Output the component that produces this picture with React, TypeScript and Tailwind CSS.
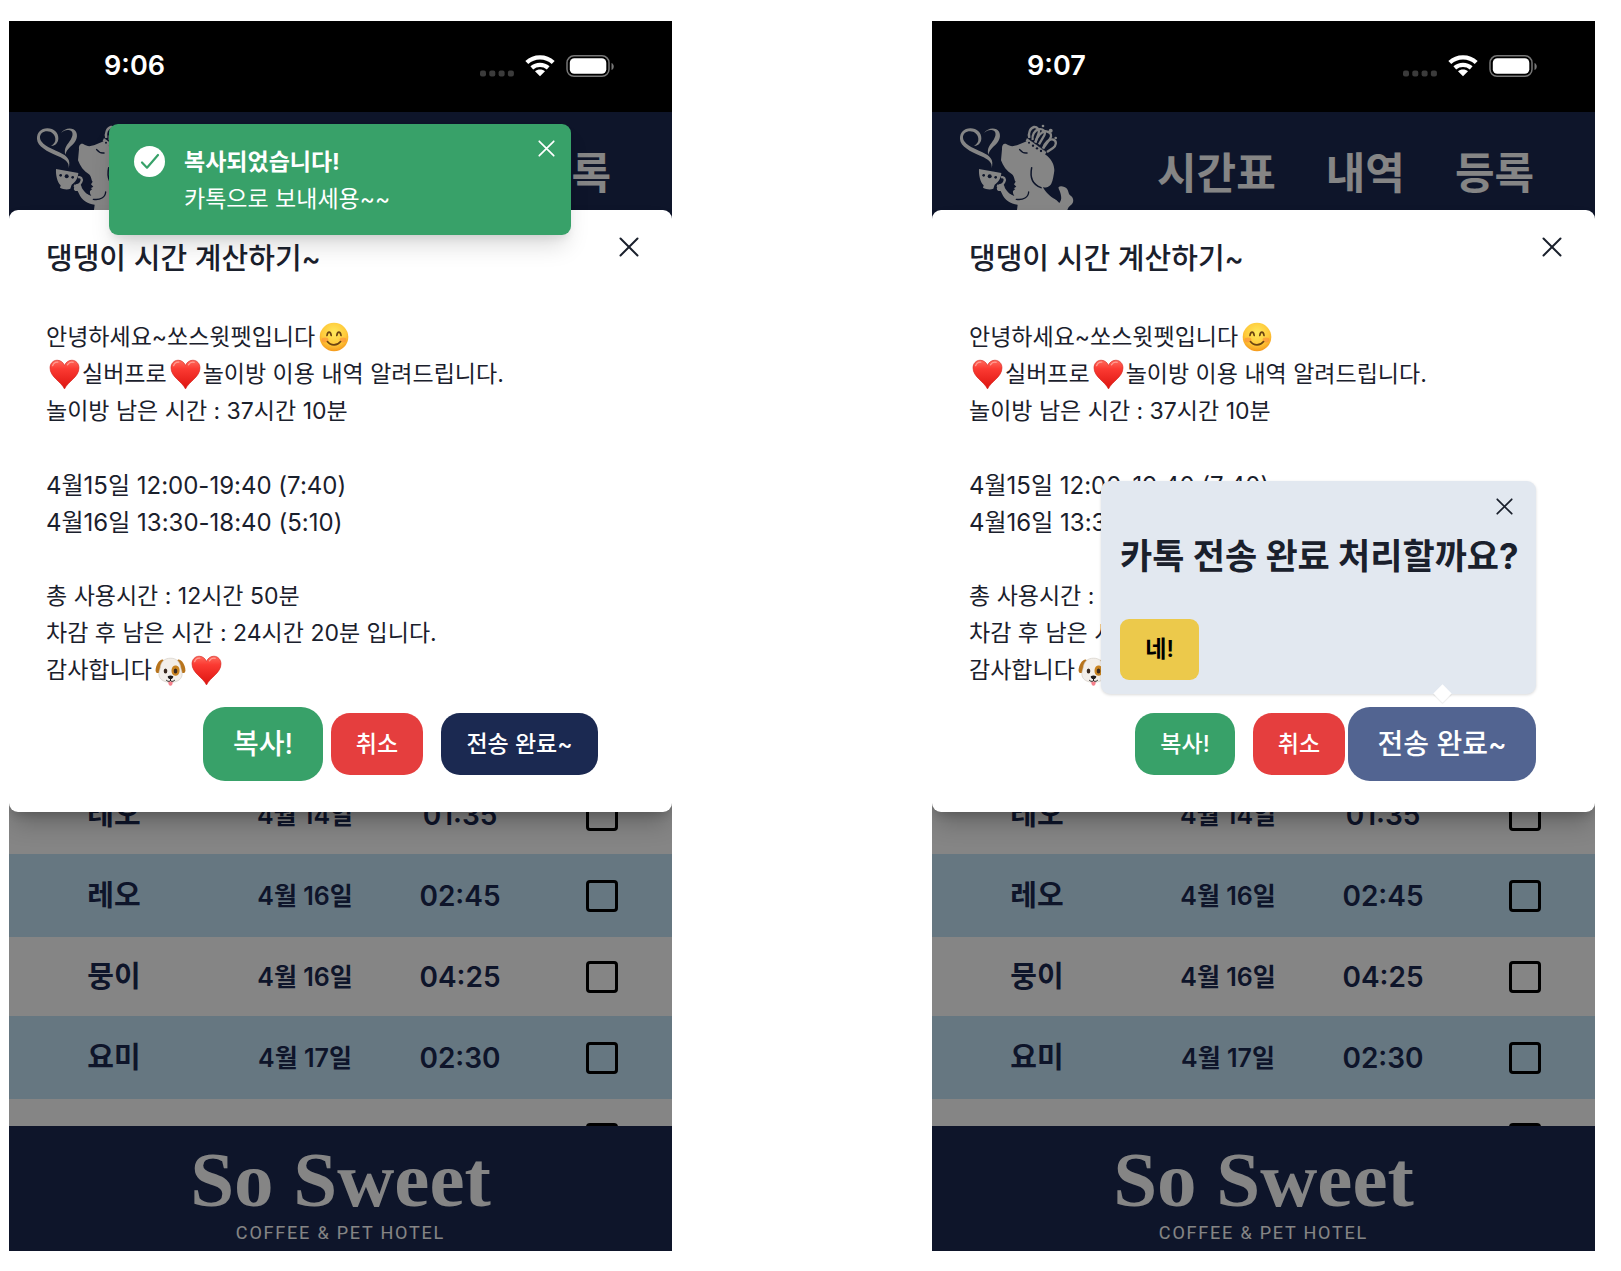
import React from "react";

const SANS = "font-['Inter','Noto_Sans_CJK_KR',sans-serif]";

function Smile() {
  return (
    <svg viewBox="0 0 30 30" role="img" aria-label="미소" className="mr-[2px] ml-[4px] inline-block h-[30px] w-[30px] align-[-7px]">
      <defs>
        <radialGradient id="smileFill" cx="0.5" cy="0.35" r="0.65">
          <stop offset="0" stopColor="#ffe95c" />
          <stop offset="0.65" stopColor="#ffc93a" />
          <stop offset="1" stopColor="#f59a1c" />
        </radialGradient>
      </defs>
      <circle cx="15" cy="15" r="14.3" fill="url(#smileFill)" />
      <ellipse cx="6" cy="18" rx="3.4" ry="2.4" fill="#fb8a3a" opacity="0.6" />
      <ellipse cx="24" cy="18" rx="3.4" ry="2.4" fill="#fb8a3a" opacity="0.6" />
      <g fill="none" stroke="#6b4412" strokeWidth="1.7" strokeLinecap="round">
        <path d="M8 13.5c.6-4.4 3.6-4.4 4.2 0" />
        <path d="M17.8 13.5c.6-4.4 3.6-4.4 4.2 0" />
        <path d="M8.4 19.6c3.2 4.4 10 4.4 13.2 0" />
      </g>
    </svg>
  );
}

function Heart() {
  return (
    <svg viewBox="0 0 30 30" role="img" aria-label="하트" className="mr-[2px] ml-[3px] inline-block h-[31px] w-[31px] align-[-8px]">
      <defs>
        <linearGradient id="heartFill" x1="0" y1="0" x2="0" y2="1">
          <stop offset="0" stopColor="#ff6a5c" />
          <stop offset="0.3" stopColor="#fb3a32" />
          <stop offset="1" stopColor="#dd1410" />
        </linearGradient>
      </defs>
      <path d="M15 29C11.5 21.5 1 17.5 1 8.6 1 4.300 4 1.200 7.900 1.200c3.300 0 5.800 2 7.100 5 1.300-3 3.800-5 7.100-5C26 1.200 29 4.300 29 8.600 29 17.500 18.500 21.500 15 29Z" fill="url(#heartFill)" stroke="#d3201a" strokeWidth="0.6" />
      <path d="M3.500 6.500c1-2.600 3-3.600 5-3.400M17.800 5.600c1.500-2.200 3.500-2.800 5.600-2.300" stroke="#ff9c92" strokeWidth="1.200" fill="none" strokeLinecap="round" />
    </svg>
  );
}

function Puppy() {
  return (
    <svg viewBox="0 0 31 29" role="img" aria-label="강아지" className="mr-[2px] ml-[3px] inline-block h-[29px] w-[31px] align-[-8px]">
      <path d="M8 2.500C4.500 2 .6 8 .6 13.500c0 2.400 2 3.200 4 2L9.500 5Z" fill="#b8741c" />
      <path d="M23 2.500C26.500 2 30.400 8 30.400 13.500c0 2.400-2 3.200-4 2L21.500 5Z" fill="#b8741c" />
      <path d="M15.500 1.200c6.500 0 9.500 4 10.200 9 .4 3 2 5 1.300 8.300-1 4.800-6 6.800-11.500 6.800S5 23.300 4 18.500C3.300 15.200 4.900 13.200 5.300 10.200c.7-5 3.700-9 10.200-9Z" fill="#f3efea" stroke="#cfc8bf" strokeWidth="0.600" />
      <path d="M20 8.500c3-.2 4.800 2 4.600 5.500-.2 3-2 5-4.400 4.800-2.600-.2-3.900-2.500-3.700-5.500.2-2.800 1.400-4.700 3.500-4.800Z" fill="#c98422" />
      <ellipse cx="10.500" cy="14" rx="1.800" ry="2.500" fill="#3a2a20" />
      <ellipse cx="20.500" cy="14" rx="1.800" ry="2.500" fill="#3a2a20" />
      <path d="M13.400 24.500h4.200c.4 2.700-.6 4.200-2.100 4.200s-2.500-1.500-2.100-4.200Z" fill="#f5808c" />
      <path d="M12.800 19.200c1.600-.8 3.800-.8 5.400 0 .5 1.300-1.300 2.900-2.700 2.900s-3.200-1.600-2.700-2.900Z" fill="#1e1a1a" />
      <path d="M15.500 22v1.600M11.500 23.400c1.500 1.300 3 1.200 4 .2 1 1 2.500 1.100 4-.2" stroke="#1e1a1a" strokeWidth="1" fill="none" strokeLinecap="round" />
    </svg>
  );
}

function DogLogo() {
  return (
    <svg viewBox="0 0 420 300" role="img" aria-label="So Sweet" className="h-[100px] w-[140px]" fill="#fff">
      <path d="M122 157c2-17-7-26-33-37C58 107 28 91 27 69c-1-19 12-32 31-32 20 0 34 14 33 31-1 14-12 23-22 21 9-5 14-12 13-21-1-12-11-22-25-22-12 0-22 8-21 20 1 16 26 29 58 43 24 11 35 22 28 48Z" />
      <path d="M99 51c9-12 25-17 37-11 13 7 14 24 5 37-10 14-25 21-29 39-6-21 8-32 16-45 8-12 8-25-3-28-9-3-18 1-26 8Z" />
      <path d="M153 100c-1-12 5-20 14-15 9 6 18 7 31 3l31-13 60 45c15 13 24 33 20 51-2 11-4 28-10 35-6 8-17 9-23 8 3 7 16 24 31 33 12 6 14 11 18 14 6-9 7-13 4-27-2-11-8-16-6-21 5-5 20-1 25 5 5 7 4 15 9 20 9 6 12 14 8 23-3 7-13 10-15 18-2 9-4 12-10 19H196l4-32c-22-2-39-15-47-33l-4-8c-8 1-13-3-11-10 2-9 10-15 18-10 5 3 4 9 7 13 6 10 15 18 27 22-2-5-5-6-4-15l7-6-5-2 8-5-7-7 5-8c-5-5-2-13-11-22-16-10-27-25-33-42Z" />
      <path d="m84 159 67 12c-1 14-7 27-20 35l-4 12c-9 4-22 2-31-3l2-7c-11-10-15-32-14-49Z" />
      <path d="M150 184c9-3 14 5 10 13-4 9-14 15-22 11" fill="none" stroke="#fff" strokeWidth="7" />
      <path d="M147 189c7-1 8 5 4 9-3 4-8 6-12 5" fill="none" stroke="#1b2951" strokeWidth="3" />
      <g fill="#1b2951">
        <circle cx="98" cy="178" r="4" />
        <circle cx="116" cy="181" r="6" />
        <circle cx="134" cy="184" r="4" />
      </g>
      <path d="M206 101c6 8 14 11 22 10M242 155c-6 30 0 50 28 60" stroke="#1b2951" strokeWidth="4.500" fill="none" strokeLinecap="round" />
      <path d="M233 228c-1 16-16 25-37 22" stroke="#1b2951" strokeWidth="4" fill="none" strokeLinecap="round" />
      <path d="m228 66 59 42-6 9-57-42Z" />
      <g fill="none" stroke="#fff" strokeWidth="7">
        <path d="M235 66c-4-14 2-30 14-33 10-1 17 9 14 18l-10 28" />
        <path d="M245 72c-3-14 6-29 17-32 15-3 23 7 18 18l-16 27" />
        <path d="M253 80c5-18 19-36 33-34 15 3 18 14 10 24l-19 26" />
        <path d="M276 98c5-19 19-31 31-27 12 5 8 19-1 25l-18 12" />
      </g>
      <path d="m229 66 58 43" stroke="#1b2951" strokeWidth="2" strokeDasharray="3 2" />
      <g fill="#1b2951">
        <circle cx="234" cy="80" r="3" />
        <circle cx="246" cy="89" r="3.500" />
        <circle cx="258" cy="97" r="3.500" />
        <circle cx="270" cy="105" r="3.500" />
      </g>
      <circle cx="276" cy="30" r="4" />
      <circle cx="299" cy="44" r="6" />
      <circle cx="314" cy="66" r="4" />
    </svg>
  );
}

function StatusIcons() {
  return (
    <svg viewBox="0 0 136 24" className="h-[24px] w-[136px]" aria-hidden="true">
      <g fill="#3b3b3b">
        <rect x="1" y="15.500" width="6" height="6" rx="2" />
        <rect x="10.300" y="15.500" width="6" height="6" rx="2" />
        <rect x="19.600" y="15.500" width="6" height="6" rx="2" />
        <rect x="28.900" y="15.500" width="6" height="6" rx="2" />
      </g>
      <path d="M61 21.300 56 16.300C58.500 13.800 63.500 13.800 66 16.300Z" fill="#fff" />
      <path d="M52.800 12.800c4.700-4 11.700-4 16.400 0M47.800 7.500c7.400-6.900 19-6.900 26.400 0" fill="none" stroke="#fff" strokeWidth="4.300" />
      <rect x="88" y="0.800" width="42" height="20.500" rx="7" fill="none" stroke="#777" strokeWidth="1.500" />
      <rect x="90.800" y="3.300" width="36.500" height="15.500" rx="4.500" fill="#fff" />
      <path d="M132.500 8c3 1 3 6 0 7Z" fill="#777" />
    </svg>
  );
}

function CloseButton({ className, size }: { className: string; size: number }) {
  return (
    <button type="button" aria-label="닫기" className={className}>
      <svg viewBox="0 0 20 20" width={size} height={size} stroke="currentColor" strokeWidth="2" strokeLinecap="round">
        <path d="M1.500 1.500 18.500 18.500M18.500 1.500 1.500 18.500" />
      </svg>
    </button>
  );
}

const rows = [
  { name: "레오", date: "4월 14일", time: "01:35" },
  { name: "레오", date: "4월 16일", time: "02:45" },
  { name: "뭉이", date: "4월 16일", time: "04:25" },
  { name: "요미", date: "4월 17일", time: "02:30" },
  { name: "", date: "", time: "" },
];

function PageLayer() {
  return (
    <div className="col-start-1 row-start-1 flex flex-col bg-white">
      <header className="flex h-[123px] items-center justify-between bg-[#1b2951] pr-[61px] pl-[19px]">
        <div className="h-[115px]">
          <DogLogo />
        </div>
        <nav className="flex gap-[50px] text-[43px] leading-none font-bold whitespace-nowrap text-white">
          <a href="#timetable">시간표</a>
          <a href="#history">내역</a>
          <a href="#register">등록</a>
        </nav>
      </header>
      <main className="flex grow flex-col justify-end">
        <div className="h-[351px] overflow-hidden">
          <table className="w-full table-fixed text-center font-semibold text-[#1b2951]">
            <colgroup>
              <col className="w-[210px]" />
              <col className="w-[172px]" />
              <col className="w-[138px]" />
              <col />
            </colgroup>
            <tbody>
              {rows.map((r, i) => (
                <tr key={i} className="h-[79px] even:h-[83px] even:bg-[#c4e4f8]">
                  <td className="text-[29px] leading-[40px] font-bold">{r.name}</td>
                  <td className="text-[25px] leading-[40px]">{r.date}</td>
                  <td className="text-[28px] leading-[40px]">{r.time}</td>
                  <td className="pl-[2px]">
                    <input
                      type="checkbox"
                      aria-label={r.name ? `${r.name} ${r.date}` : "선택"}
                      className="mx-auto block size-[32px] appearance-none rounded-[4px] border-[3px] border-black"
                    />
                  </td>
                </tr>
              ))}
            </tbody>
          </table>
        </div>
      </main>
      <footer className="flex h-[125px] flex-col items-center justify-between bg-[#1b2951] pt-[14px] pb-[8px] text-white">
        <p className="font-['Liberation_Serif',serif] text-[79px] leading-[80px] font-bold whitespace-nowrap">So Sweet</p>
        <p className="font-['Roboto',sans-serif] text-[18px] leading-[20px] tracking-widest">COFFEE &amp; PET HOTEL</p>
      </footer>
    </div>
  );
}

function Toast() {
  return (
    <div role="status" className="absolute top-[12px] left-[100px] z-20 flex w-[462px] gap-[19px] rounded-[9px] bg-[#38a169] pt-[20px] pb-[17px] pl-[25px] text-[23px] leading-[37px] text-white shadow-[0_15px_23px_-5px_rgba(0,0,0,0.15),0_6px_9px_-3px_rgba(0,0,0,0.08)]">
      <svg viewBox="0 0 31 31" className="mt-[2px] size-[31px] shrink-0" aria-hidden="true">
        <circle cx="15.500" cy="15.500" r="15.500" fill="#fff" />
        <path d="m8 16.500 5 5.200L24 9" fill="none" stroke="#38a169" strokeWidth="2.200" strokeLinecap="round" strokeLinejoin="round" />
      </svg>
      <div>
        <p className="font-bold">복사되었습니다!</p>
        <p>카톡으로 보내세용~~</p>
      </div>
      <CloseButton size={17} className="absolute top-[16px] right-[16px]" />
    </div>
  );
}

function Popover() {
  return (
    <div role="dialog" aria-label="전송 확인" className="absolute right-0 bottom-[81px] z-10 w-[435px] rounded-[9px] bg-[#e2e8f0] pt-[49px] pb-[14px] pl-[19px] shadow-[0_1px_3px_rgba(0,0,0,0.15)]">
      <CloseButton size={17} className="absolute top-[17px] right-[23px]" />
      <h2 className="text-[35px] leading-[52px] font-bold whitespace-nowrap">카톡 전송 완료 처리할까요?</h2>
      <button type="button" className="mt-[37px] block h-[61px] w-[79px] rounded-[9px] bg-[#ecc94b] text-[23px] font-semibold text-black">
        네!
      </button>
      <span className="absolute right-[87px] -bottom-[6px] size-[13px] rotate-45 bg-white shadow-[1px_1px_1px_rgba(0,0,0,0.08)]" />
    </div>
  );
}

const BTN = "h-[62px] shrink-0 rounded-[19px] text-[23px] font-medium whitespace-nowrap text-white";
const BTN_ACTIVE = "h-[74px] shrink-0 -my-[6px] rounded-[22px] text-[28px] font-medium whitespace-nowrap text-white";

function Modal({ sending }: { sending: boolean }) {
  return (
    <section aria-label="댕댕이 시간 계산하기" className="relative col-start-1 row-start-1 mt-[98px] self-start rounded-[9px] bg-white pb-[37px] text-[#1a202c] shadow-[0_15px_23px_-5px_rgba(0,0,0,0.25),0_6px_9px_-3px_rgba(0,0,0,0.15)]">
      <CloseButton size={20} className="absolute top-[27px] right-[33px]" />
      <h1 className="pt-[26px] pl-[37px] text-[29px] leading-[46px] font-medium">댕댕이 시간 계산하기~</h1>
      <div className="mt-[37px] pl-[37px] text-[23px] leading-[37px] whitespace-nowrap">
        <p className="h-[37px]">안녕하세요~쏘스윗펫입니다<Smile /></p>
        <p className="h-[37px]"><Heart />실버프로<Heart />놀이방 이용 내역 알려드립니다.</p>
        <p className="h-[37px]">놀이방 남은 시간 : 37시간 10분</p>
        <p className="mt-[37px] h-[37px] text-[24px]">4월15일 12:00-19:40 (7:40)</p>
        <p className="h-[37px] text-[24px]">4월16일 13:30-18:40 (5:10)</p>
        <p className="mt-[37px] h-[37px]">총 사용시간 : 12시간 50분</p>
        <p className="h-[37px]">차감 후 남은 시간 : 24시간 20분 입니다.</p>
        <p className="h-[37px]">감사합니다<Puppy /><Heart /></p>
      </div>
      <div className="mt-[24px] flex items-center justify-end gap-[18px] pr-[74px]">
        <button type="button" className={sending ? `${BTN} w-[100px] bg-[#38a169]` : `${BTN_ACTIVE} -mx-[10px] w-[120px] bg-[#38a169]`}>복사!</button>
        <button type="button" className={`${BTN} w-[92px] bg-[#e53e3e]`}>취소</button>
        {sending ? (
          <div className="relative -mx-[15px]">
            <button type="button" className={`${BTN_ACTIVE} block w-[188px] bg-[#526491]`}>전송 완료~</button>
            <Popover />
          </div>
        ) : (
          <button type="button" className={`${BTN} w-[157px] bg-[#1b2951]`}>전송 완료~</button>
        )}
      </div>
    </section>
  );
}

function Phone({ time, sending }: { time: string; sending: boolean }) {
  return (
    <article className="flex aspect-[663/1230] min-w-0 flex-col overflow-hidden">
      <div className="flex h-[91px] shrink-0 items-center justify-between bg-black pr-[57px] pl-[95px]">
        <time className="text-[27px] font-semibold text-white">{time}</time>
        <StatusIcons />
      </div>
      <div className="relative grid grow">
        <PageLayer />
        <div className="col-start-1 row-start-1 bg-black/48" />
        <Modal sending={sending} />
        {!sending && <Toast />}
      </div>
    </article>
  );
}

export default function App() {
  return (
    <div className={`grid min-h-screen grid-cols-2 items-start gap-[260px] bg-white pt-[21px] pr-[26px] pb-[20px] pl-[9px] ${SANS}`}>
      <Phone time="9:06" sending={false} />
      <Phone time="9:07" sending={true} />
    </div>
  );
}
